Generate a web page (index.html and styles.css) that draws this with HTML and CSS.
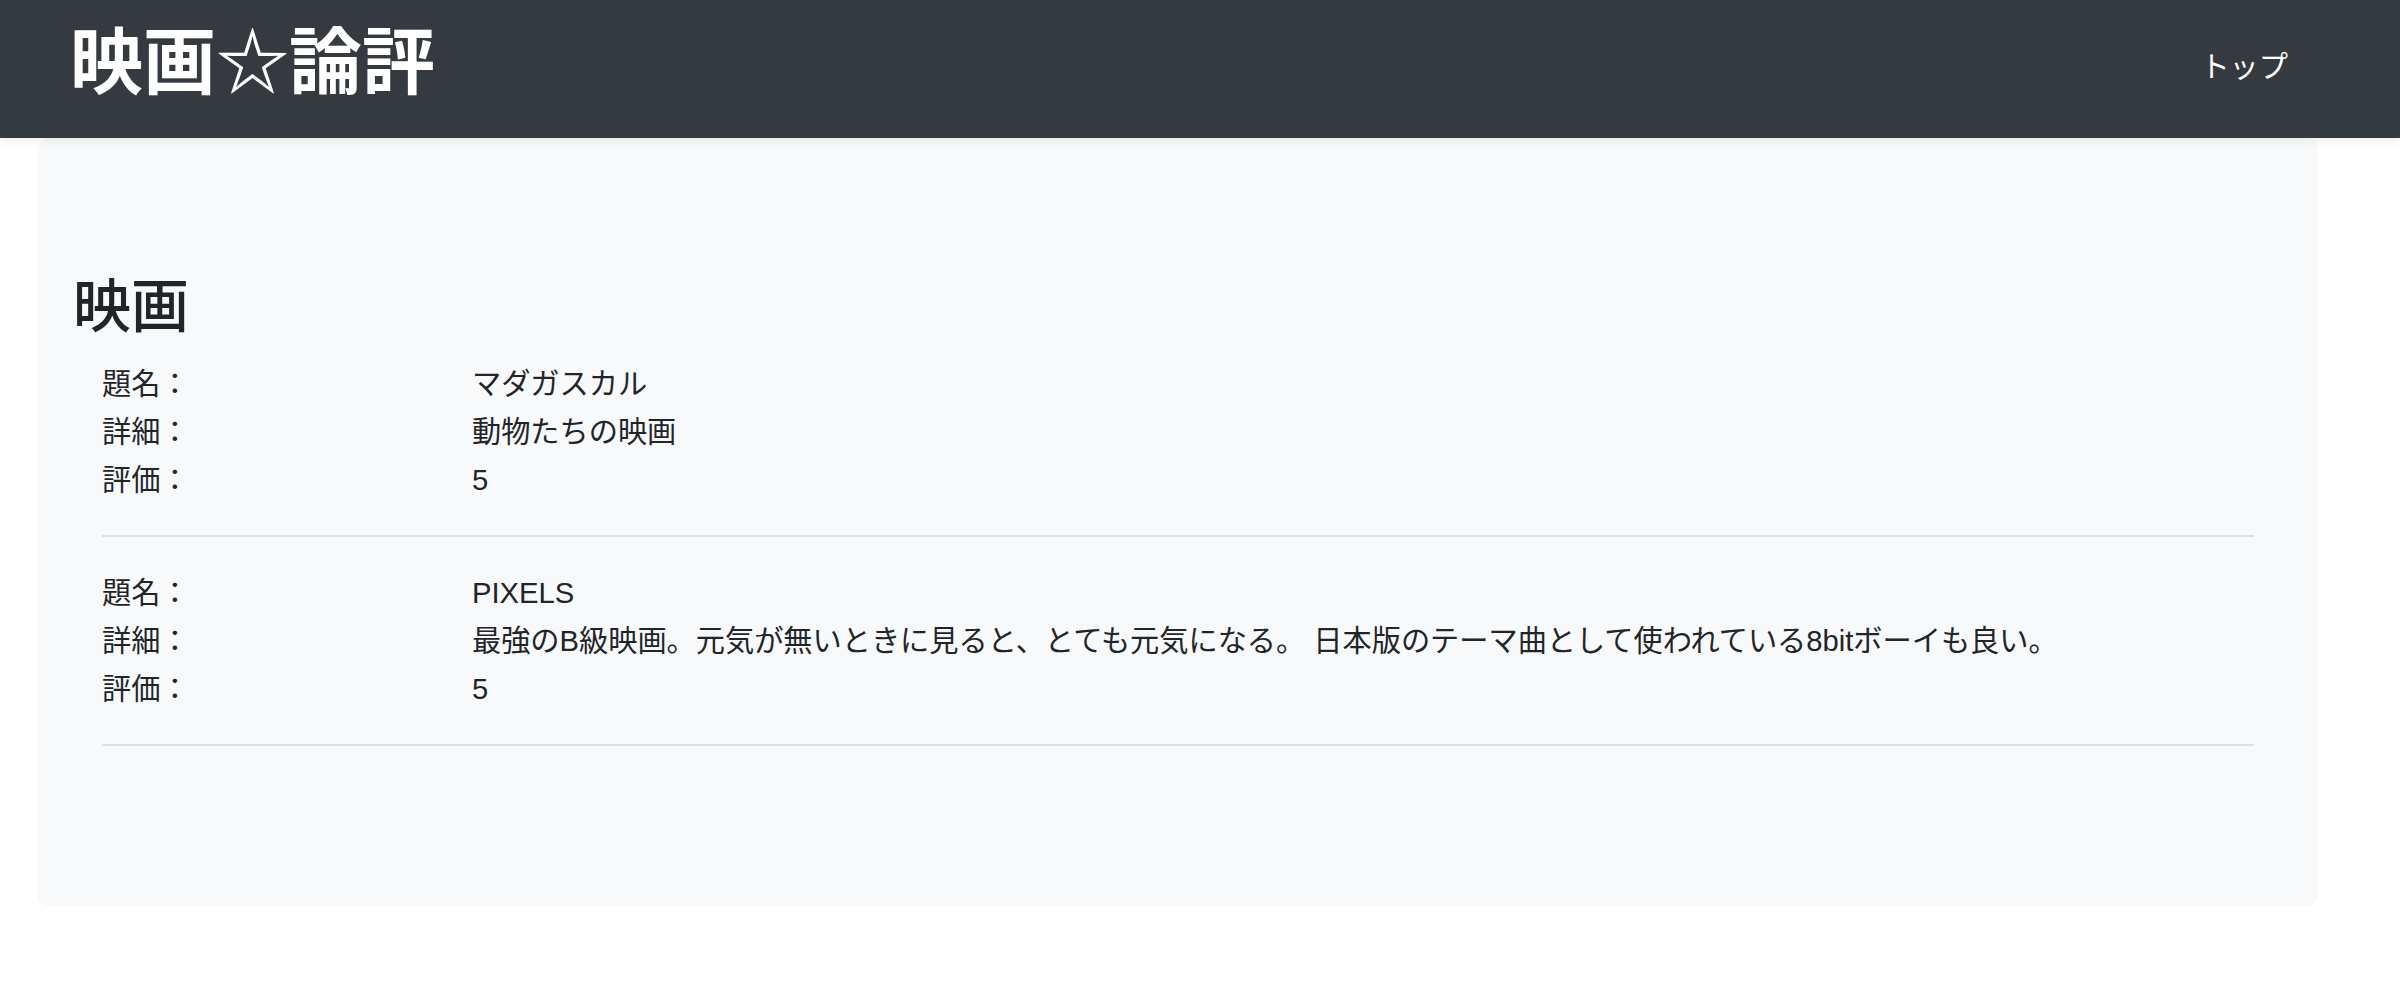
FILE: index.html
```html
<!DOCTYPE html>
<html lang="ja">
<head>
<meta charset="utf-8">
<title>映画☆論評</title>
<link rel="stylesheet" href="styles.css">
</head>
<body>
<header class="navbar">
  <h1 class="brand">映画☆論評</h1>
  <nav class="nav"><a class="nav-link" href="#">トップ</a></nav>
</header>
<main class="jumbotron">
  <h2 class="title">映画</h2>
  <section class="movies">
    <dl class="movie">
      <dt>題名：</dt><dd>マダガスカル</dd>
      <dt>詳細：</dt><dd>動物たちの映画</dd>
      <dt>評価：</dt><dd>5</dd>
    </dl>
    <hr class="sep">
    <dl class="movie">
      <dt>題名：</dt><dd>PIXELS</dd>
      <dt>詳細：</dt><dd>最強のB級映画。元気が無いときに見ると、とても元気になる。 日本版のテーマ曲として使われている8bitボーイも良い。</dd>
      <dt>評価：</dt><dd>5</dd>
    </dl>
    <hr class="sep">
  </section>
</main>
</body>
</html>
```
FILE: styles.css
```css
* { box-sizing: border-box; }
html, body {
  margin: 0;
  padding: 0;
  background: #fff;
}
body {
  font-family: "Liberation Sans", "Noto Sans CJK JP", sans-serif;
  font-size: 29.2px;
  color: #212529;
}
.navbar {
  position: relative;
  z-index: 2;
  height: 138px;
  background: #343a40;
  display: flex;
  align-items: center;
  justify-content: space-between;
  padding: 0 112px 0 70px;
  box-shadow: 0 3px 8px rgba(0, 0, 0, 0.07);
}
.brand {
  margin: 0 0 12px 0;
  font-size: 73px;
  line-height: 86px;
  font-weight: 700;
  color: #fff;
}
.nav-link {
  color: #fff;
  text-decoration: none;
  font-size: 29.2px;
  line-height: 43px;
  display: block;
  margin-bottom: 4px;
}
.jumbotron {
  position: relative;
  z-index: 1;
  margin: 0 82px 0 38px;
  background: #f8f9fa;
  border-radius: 10px;
  padding: 134px 64px 128px 35px;
}
.title {
  margin: 0 0 19px 0;
  font-size: 58px;
  line-height: 69px;
  font-weight: 500;
}
.movies {
  padding-left: 29px;
}
.movie {
  margin: 0;
  display: grid;
  grid-template-columns: 370px 1fr;
}
.movie dt,
.movie dd {
  margin: 0;
  font-weight: 400;
  line-height: 48px;
  white-space: nowrap;
}
.sep {
  margin: 31px 0 32px 0;
  border: 0;
  height: 2px;
  background: #dfe0e1;
}
```
